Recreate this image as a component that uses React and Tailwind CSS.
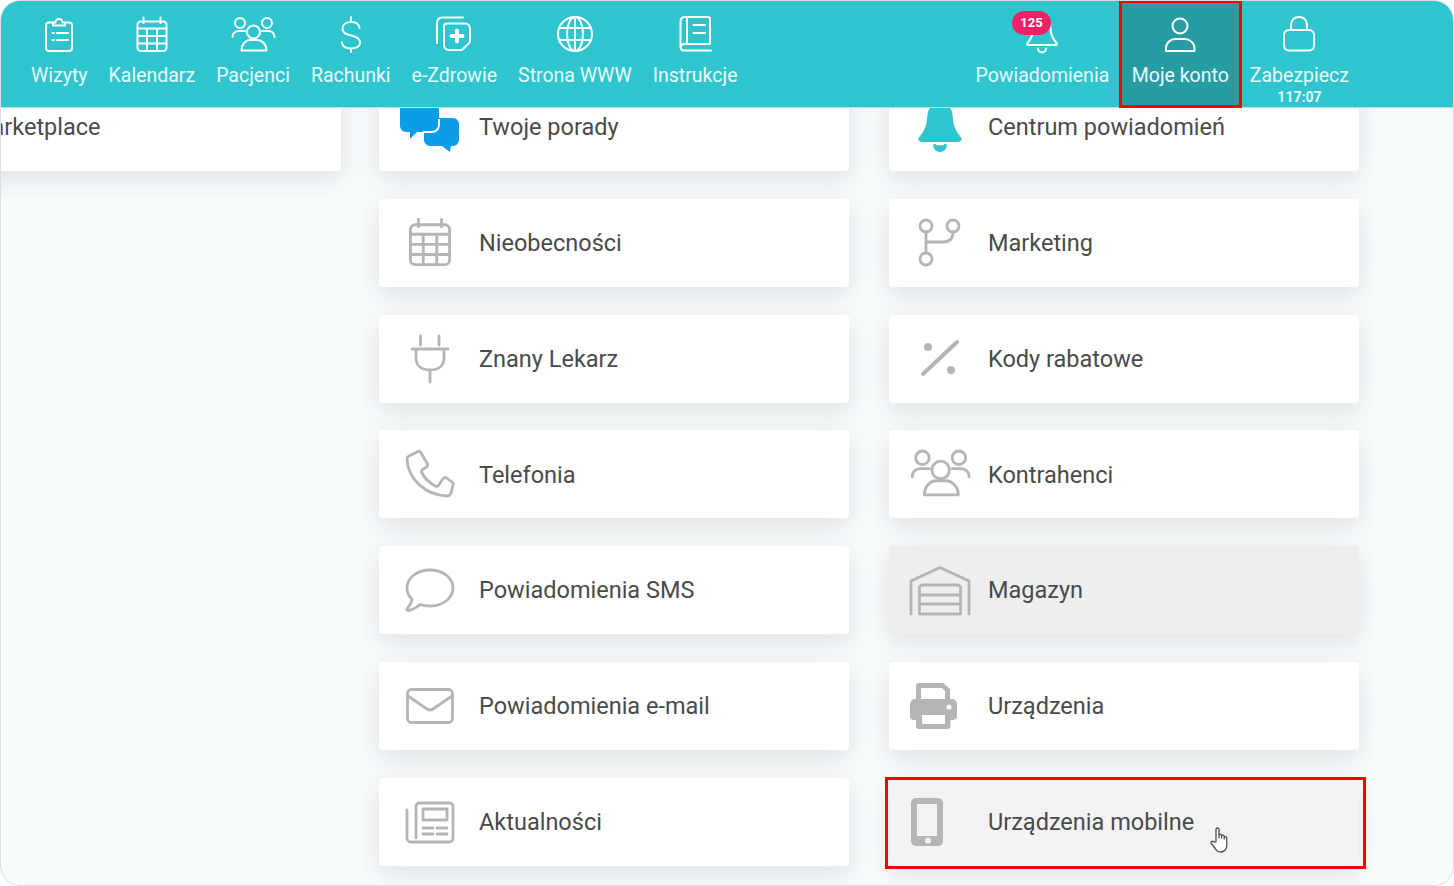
const gray = '#b5b5b5'

// nav icons drawn on a 40 box, card icons on a 60 box
const ClipboardIcon = () => (
  <>
    <path d="M14 7.500H10a3 3 0 0 0-3 3V33a3 3 0 0 0 3 3h20a3 3 0 0 0 3-3V10.500a3 3 0 0 0-3-3h-4" />
    <path d="M14 10.500V7.500h2.500a3.500 3.500 0 0 1 7 0H26v3z" />
    <path d="M13.500 18h1.500M18 18h11M13.500 25h1.500M18 25h11" />
  </>
)
const CalendarIcon = () => (
  <>
    <rect x="5.500" y="6.500" width="29" height="29.500" rx="3.500" />
    <path d="M11.500 2.500V8M28.500 2.500V8M5.500 13.500h29M5.500 21h29M5.500 28.500h29M15 13.500V36M25 13.500V36" />
  </>
)
const PeopleIcon = () => (
  <>
    <circle cx="7" cy="8" r="5" />
    <circle cx="34" cy="8" r="5" />
    <circle cx="20.500" cy="17" r="6.500" />
    <path d="M8.500 35.500C8.500 29 13 25 17 25h7.500c4 0 9 4 9 10.500z" />
    <path d="M-.5 22c0-4 3-6 6.500-6h6M41.500 22c0-4-3-6-6.500-6h-6" />
  </>
)
const DollarIcon = () => (
  <path d="M28.500 13C28 9 25 7 20 7c-5 0-8.500 2.500-8.500 6.500 0 4.500 3.500 6 8.500 7s9 2.500 9 7c0 4-4 6-9 6s-8.500-2-9-6M20 2v5M20 33.500V37" />
)
const HealthIcon = () => (
  <>
    <path d="M29 2.500H8a5 5 0 0 0-5 5V28" />
    <path d="M13 8.500h18a5 5 0 0 1 5 5V26a3 3 0 0 1-1 2l-6 6a3 3 0 0 1-2 1H15a5 5 0 0 1-5-5V11.500a3 3 0 0 1 3-3z" />
    <path d="M23 15.500v11M17.500 21h11" strokeWidth="4" />
  </>
)
const GlobeIcon = () => (
  <>
    <circle cx="20" cy="19" r="17" />
    <ellipse cx="20" cy="19" rx="8" ry="17" />
    <path d="M20 2v34M4 13h32M4 25h32" />
  </>
)
const BookIcon = () => (
  <>
    <path d="M5.500 32V6a4 4 0 0 1 4-4H33a2 2 0 0 1 2 2v25H9.500a4 4 0 0 0-4 3.500 3.500 3.500 0 0 0 4 3H36" />
    <path d="M12 2v27M18.500 10H30M18.500 18H30" />
  </>
)
const BellIcon = ({ fill }) => (
  <>
    <path d="M20 3c6 0 8.500 5 8.500 10 0 7 2.500 11 6 15 1 1.500 0 2-1 2h-27c-1 0-2-.5-1-2 3.500-4 6-8 6-15 0-5 2.500-10 8.500-10z" fill={fill} />
    <path d="M16 33.500a4 4 0 0 0 8 0" fill={fill} />
  </>
)
const UserIcon = () => (
  <>
    <circle cx="20" cy="11" r="7.500" />
    <path d="M6 36v-3c0-5.500 5-9 9-9h10c4 0 9.500 3.500 9.500 9v3z" />
  </>
)
const LockIcon = () => (
  <>
    <rect x="5" y="15" width="30" height="20.500" rx="5" />
    <path d="M12 15v-5c0-5 3.500-8 8-8s8 3 8 8v5" />
  </>
)

const NavIcon = ({ children }) => (
  <svg viewBox="0 0 40 40" width="40" height="40" fill="none" stroke="#ffffff" strokeWidth="2" strokeLinecap="round" strokeLinejoin="round" className="overflow-visible shrink-0">
    {children}
  </svg>
)

const navLeft = [
  { label: 'Wizyty', icon: ClipboardIcon },
  { label: 'Kalendarz', icon: CalendarIcon },
  { label: 'Pacjenci', icon: PeopleIcon },
  { label: 'Rachunki', icon: DollarIcon },
  { label: 'e-Zdrowie', icon: HealthIcon },
  { label: 'Strona WWW', icon: GlobeIcon },
  { label: 'Instrukcje', icon: BookIcon },
]

// 40-box icons blown up to the card size
const Big = ({ children, stroke = gray, strokeWidth = 2.100 }) => (
  <svg viewBox="-2.200 -2.200 44.400 44.400" width="60" height="60" fill="none" stroke={stroke} strokeWidth={strokeWidth} strokeLinecap="round" strokeLinejoin="round" className="overflow-visible">
    {children}
  </svg>
)
const Box = ({ children, strokeWidth = 2.800 }) => (
  <svg viewBox="0 0 60 60" width="60" height="60" fill="none" stroke={gray} strokeWidth={strokeWidth} strokeLinecap="round" strokeLinejoin="round" className="overflow-visible">
    {children}
  </svg>
)

const ChatsIcon = () => (
  <svg viewBox="0 0 60 60" width="60" height="60" className="overflow-visible">
    <path d="M24 21h29a6 6 0 0 1 6 6v16a6 6 0 0 1-6 6h-2l-1 6-8-6H30a6 6 0 0 1-6-6z" fill="#0b9de8" />
    <path d="M0-10h39v38a7 7 0 0 1-7 7H17l-7 7v-7H6a6 6 0 0 1-6-6z" fill="#0b9de8" />
    <path d="M39 22v6a7 7 0 0 1-7 7H23" fill="none" stroke="#ffffff" strokeWidth="2" />
  </svg>
)
const PlugIcon = () => (
  <Box>
    <path d="M20.500 7v9M39 7v9M12 20h36M16 20v9c0 8 6 12 14 12s14-4 14-12v-9M30 41v12" />
  </Box>
)
const PhoneIcon = () => (
  <Box>
    <path d="M9 12l9-4.500q2-1 3 1.500l6.500 11q.5 2-1 3L22 26q-1 1 0 3c3 6 8 10 13 13q2 1 3 0l4-6q2-3 4-2.500l6 4.500q2 1.500 1 3l-2 8q-1 3-4 3C25 51 8 35 7 15q0-2 2-3z" />
  </Box>
)
const SmsIcon = () => (
  <Box>
    <path d="M30 10c13 0 23 8 23 18s-10 18-23 18c-4 0-7-.5-10-1.500-4 3.500-8 5.500-12 6q-2-.5-.5-2.500c2.500-2.500 4-5.500 4.500-9-3.500-3-5-7-5-11 0-10 10-18 23-18z" />
  </Box>
)
const MailIcon = () => (
  <Box>
    <rect x="7.500" y="13.500" width="45" height="33" rx="4" />
    <path d="M8 20l19 13q3 2 6 0l19-13" />
  </Box>
)
const NewsIcon = () => (
  <Box>
    <path d="M16 46V14a3 3 0 0 1 3-3h31a3 3 0 0 1 3 3v32a4 4 0 0 1-4 4H11a4 4 0 0 1-4-4V18" />
    <rect x="23" y="17" width="24" height="11" />
    <path d="M23 36h10M37 36h10M23 42h10M37 42h10" />
  </Box>
)
const ForkIcon = () => (
  <Box>
    <circle cx="16" cy="13" r="6" />
    <circle cx="43" cy="13" r="6" />
    <circle cx="16" cy="46" r="6" />
    <path d="M16 19v21M43 19c0 7-4 10-10 10H16" />
  </Box>
)
const PercentIcon = () => (
  <Box strokeWidth={4}>
    <path d="M47 13L13 45" />
    <circle cx="18" cy="18" r="4" fill={gray} stroke="none" />
    <circle cx="41" cy="41" r="4" fill={gray} stroke="none" />
  </Box>
)
const GarageIcon = () => (
  <Box>
    <path d="M1 54V21L30 7.500 59 21v33" />
    <path d="M9.500 54V28a3 3 0 0 1 3-3h35a3 3 0 0 1 3 3v26zM9.500 35h41M9.500 44h41" />
  </Box>
)
const PrinterIcon = () => (
  <svg viewBox="0 0 60 60" width="60" height="60" className="overflow-visible">
    <path d="M6 24V10a3 3 0 0 1 3-3h24l7 6v11h-5V15l-3-3H11v12z" fill={gray} />
    <path d="M5 23h37a5 5 0 0 1 5 5v12a4 4 0 0 1-4 4h-2.500v6a3 3 0 0 1-3 3H9a3 3 0 0 1-3-3v-6H4a4 4 0 0 1-4-4V28a5 5 0 0 1 5-5z" fill={gray} />
    <rect x="12" y="39" width="23" height="9" fill="#ffffff" />
    <circle cx="39" cy="31" r="2.500" fill="#ffffff" />
  </svg>
)
const MobileIcon = () => (
  <svg viewBox="0 0 60 60" width="60" height="60" className="overflow-visible">
    <rect x="1" y="6" width="32" height="48" rx="5" fill={gray} />
    <rect x="7" y="12" width="20" height="32" fill="#f3f3f3" />
    <circle cx="18" cy="48.500" r="3" fill="#f3f3f3" />
  </svg>
)
const HandCursor = () => (
  <svg viewBox="0 0 20 26" width="20" height="26" className="absolute left-[321px] top-[49px]">
    <path d="M6 15V2.500a1.500 1.500 0 0 1 3 0V11V8.500a1.300 1.300 0 0 1 2.600 0V11V9.500a1.300 1.300 0 0 1 2.600 0V12v-1a1.300 1.300 0 0 1 2.600 0v7c0 4-2.500 7-6 7-3 0-4.500-1.500-6-4l-3.500-4.500c-1-1.500 1-3 2.500-1.700z" fill="#ffffff" stroke="#4b4f57" strokeWidth="1.300" strokeLinejoin="round" />
  </svg>
)

const middleCards = [
  { label: 'Twoje porady', icon: <ChatsIcon /> },
  { label: 'Nieobecności', icon: <Big><CalendarIcon /></Big> },
  { label: 'Znany Lekarz', icon: <PlugIcon /> },
  { label: 'Telefonia', icon: <PhoneIcon /> },
  { label: 'Powiadomienia SMS', icon: <SmsIcon /> },
  { label: 'Powiadomienia e-mail', icon: <MailIcon /> },
  { label: 'Aktualności', icon: <NewsIcon /> },
]

const rightCards = [
  { label: 'Centrum powiadomień', icon: <Big stroke="#2fc5ce"><BellIcon fill="#2fc5ce" /></Big> },
  { label: 'Marketing', icon: <ForkIcon /> },
  { label: 'Kody rabatowe', icon: <PercentIcon /> },
  { label: 'Kontrahenci', icon: <Big><PeopleIcon /></Big> },
  { label: 'Magazyn', icon: <GarageIcon />, bg: 'bg-[#eeeeee]' },
  { label: 'Urządzenia', icon: <PrinterIcon /> },
  { label: 'Urządzenia mobilne', icon: <MobileIcon />, bg: 'bg-[#f3f3f3]', marked: true },
]

function NavItem({ label, icon: Icon, children, className = 'px-[10px]' }) {
  return (
    <div className={`relative flex flex-col items-center pt-[14px] ${className}`}>
      <NavIcon><Icon /></NavIcon>
      <span className="mt-[10px] text-[19.500px] leading-[22px] text-[#e9fbfc] whitespace-nowrap">{label}</span>
      {children}
    </div>
  )
}

function Card({ label, icon, bg = 'bg-white', marked, iconGap = 'mr-[19px]' }) {
  return (
    <div className={`relative flex items-center h-[88px] rounded-[4px] shadow-[0_8px_26px_rgba(40,50,60,0.12)] ${bg}`}>
      <div className={`ml-[21px] w-[60px] h-[60px] shrink-0 ${iconGap}`}>{icon}</div>
      <span className="mt-[2px] text-[23.500px] leading-none text-[#4a4a4a] whitespace-nowrap">{label}</span>
      {marked && (
        <>
          <div className="absolute -left-[4px] -right-[7px] -top-[1px] -bottom-[3px] border-[3px] border-[#fa0000]" />
          <HandCursor />
        </>
      )}
    </div>
  )
}

export default function App() {
  return (
    <div className="w-[1454px] h-[886px] bg-white font-['Roboto',sans-serif]">
      <div className="flex flex-col h-full rounded-[20px] border border-[#dddddd] bg-[#f7fbfc] overflow-hidden">
        {/* Top bar */}
        <header className="relative z-10 flex h-[107px] shrink-0 pl-[19.500px] bg-[#2fc5ce] border-b border-[#a9e5e9]">
          {navLeft.map(item => <NavItem key={item.label} {...item} className="px-[10.500px]" />)}
          <div className="flex ml-auto mr-[94px]">
            <NavItem label="Powiadomienia" icon={() => <BellIcon />} className="px-[9.500px]">
              <span className="absolute left-[46px] top-[10px] w-[39px] h-[24px] rounded-full bg-[#ee2167] flex items-center justify-center text-[13px] font-bold text-white">125</span>
            </NavItem>
            <NavItem label="Moje konto" icon={UserIcon} className="h-[108px] -mt-px !pt-[12px] px-[10px] border-[3px] border-[#fa0000] bg-[#279ca3]" />
            <NavItem label="Zabezpiecz" icon={LockIcon} className="pl-[8px] pr-[10px]">
              <span className="text-[14px] leading-[16px] mt-[2px] font-bold text-[#e9fbfc]">117:07</span>
            </NavItem>
          </div>
        </header>

        {/* Settings tiles, scrolled under the bar */}
        <main className="flex-1 overflow-hidden">
          <div className="flex -mt-[25px] -ml-[130px]">
            <div className="w-[470px] mr-[38px]">
              <Card label="Marketplace" />
            </div>
            <div className="flex flex-col gap-[27.800px] w-[470px] mr-[40px]">
              {middleCards.map(c => <Card key={c.label} {...c} />)}
            </div>
            <div className="flex flex-col gap-[27.800px] w-[470px]">
              {rightCards.map(c => <Card key={c.label} {...c} iconGap="mr-[18px]" />)}
            </div>
          </div>
        </main>
      </div>
    </div>
  )
}
